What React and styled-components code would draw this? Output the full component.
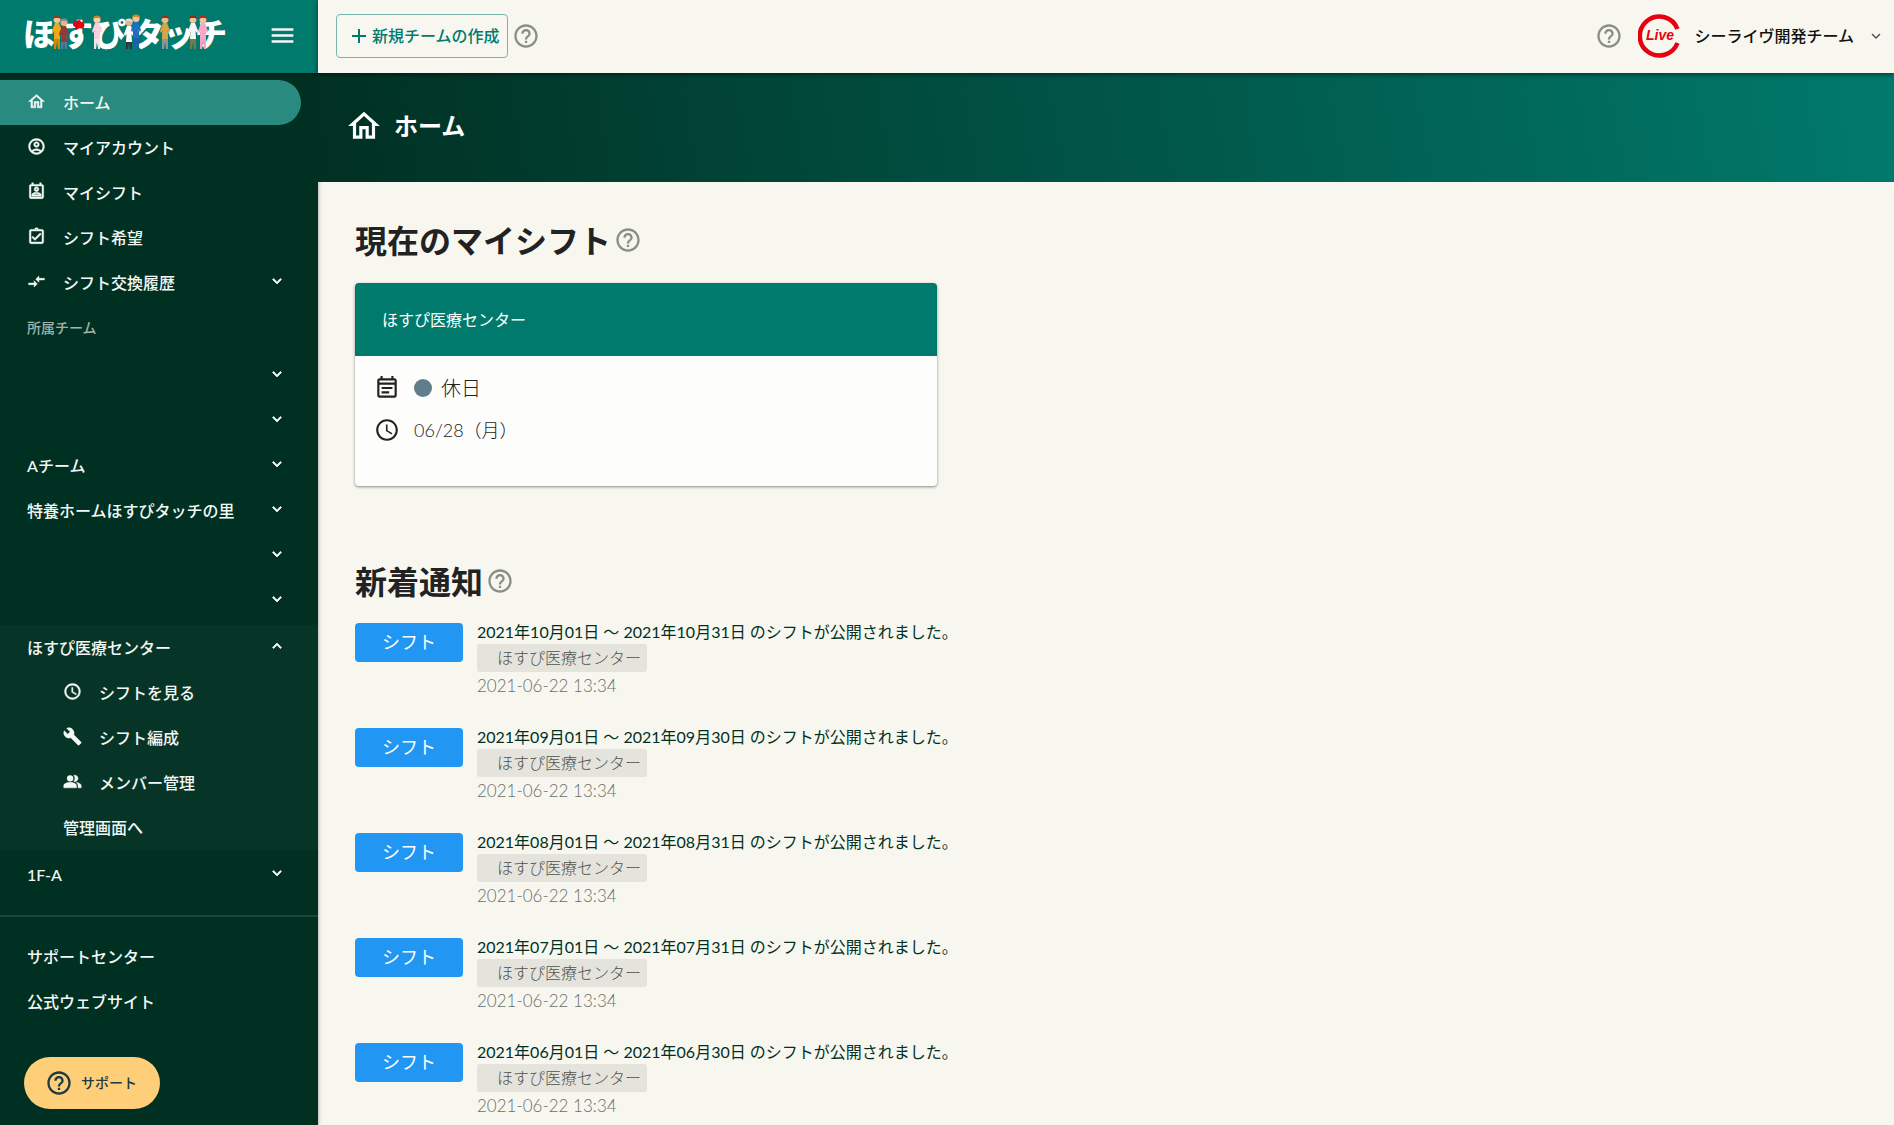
import React from 'react';
import styled, { createGlobalStyle } from 'styled-components';
import {
  MdOutlineHome,
  MdOutlineAccountCircle,
  MdOutlinePermContactCalendar,
  MdOutlineAssignmentTurnedIn,
  MdCompareArrows,
  MdAccessTime,
  MdBuild,
  MdPeopleAlt,
  MdOutlineEventNote,
  MdHelpOutline,
  MdExpandMore,
  MdExpandLess,
  MdMenu,
  MdAdd,
} from 'react-icons/md';

const color = {
  primary: '#007a6c',
  deep: '#003022',
  group: '#063527',
  active: '#298b7f',
  page: '#f7f7f0',
  ink: '#222222',
  muted: '#8a8f86',
  blue: '#2196f3',
};

const GlobalStyle = createGlobalStyle`
  *, *::before, *::after { box-sizing: border-box; }
  body {
    margin: 0;
    background: ${color.page};
    color: ${color.ink};
    font-family: Lato, "Noto Sans CJK JP", sans-serif;
    font-size: 16px;
    line-height: 24px;
  }
  button { font: inherit; color: inherit; border: 0; padding: 0; background: none; cursor: pointer; }
  a { color: inherit; text-decoration: none; }
  svg { display: block; flex: none; }
  h1, h2, h3, p, ul { margin: 0; padding: 0; }
  ul { list-style: none; }
`;

const Shell = styled.div`
  display: grid;
  grid-template-columns: 318px minmax(0, 1fr);
  min-height: 100vh;
`;

const Sidebar = styled.aside`
  background: ${color.deep};
  color: #f4f8f5;
  font-weight: 500;
  box-shadow: 0 0 4px rgba(0, 0, 0, 0.4);
`;

const Brand = styled.div`
  display: flex;
  align-items: center;
  justify-content: space-between;
  height: 73px;
  padding: 0 21px 2px 20px;
  background: ${color.primary};
  box-shadow: 0 1px 4px rgba(0, 0, 0, 0.5);
`;

const Nav = styled.nav`
  display: flex;
  flex-direction: column;
  gap: 2px;
  padding-top: 7px;
`;

const Section = styled.ul`
  background: ${(p) => (p.$open ? color.group : 'transparent')};
`;

const rowStyle = `
  display: flex;
  align-items: center;
  gap: 17px;
  height: 45px;
  text-align: left;
  svg { margin-bottom: 3px; stroke: none; }
  svg path:not([fill="none"]) { stroke: currentColor; stroke-width: 0.6px; }
`;

const RowLink = styled.a`
  ${rowStyle}
  margin-right: 17px;
  padding-left: ${(p) => (p.$nested ? 63 : 27)}px;
  border-radius: 0 23px 23px 0;
  background: ${(p) => (p.$active ? color.active : 'transparent')};
`;

const RowButton = styled.button`
  ${rowStyle}
  width: 100%;
  padding: 0 32px 0 27px;
  svg:last-child { margin-left: auto; }
  svg:last-child path:not([fill="none"]) { stroke-width: 1px; }
`;

const SectionLabel = styled.h3`
  height: 44px;
  padding-left: 27px;
  font-size: 14px;
  font-weight: 500;
  line-height: 42px;
  color: #a3b4ad;
`;

const Divider = styled.hr`
  width: 100%;
  height: 2px;
  margin: 16px 0 15px;
  border: 0;
  background: #1a4538;
`;

const SupportButton = styled.button`
  position: fixed;
  left: 24px;
  bottom: 16px;
  display: flex;
  align-items: center;
  gap: 8px;
  height: 52px;
  padding: 0 23px 0 21px;
  border-radius: 26px;
  background: #ffce78;
  color: #203a44;
  font-size: 14px;
  font-weight: 500;
`;

const Topbar = styled.header`
  position: relative;
  display: flex;
  align-items: center;
  height: 73px;
  padding: 0 9px 2px 18px;
  background: ${color.page};
  box-shadow: 0 1px 5px rgba(0, 0, 0, 0.6);
`;

const CreateButton = styled.button`
  display: flex;
  align-items: center;
  gap: 1px;
  height: 44px;
  padding: 0 7px 0 10px;
  border: 1px solid #76b5aa;
  border-radius: 4px;
  color: ${color.primary};
  font-weight: 500;
`;

const HelpButton = styled.button`
  color: ${color.muted};
  margin-left: ${(p) => p.$gap || 0}px;
`;

const Account = styled.div`
  display: flex;
  align-items: center;
  margin-left: auto;
`;

const TeamMenu = styled.button`
  display: flex;
  align-items: center;
  gap: 13px;
  margin-left: 15px;
  font-weight: 500;
  color: #111;
  svg:last-child { color: #555; }
`;

const Banner = styled.div`
  display: flex;
  align-items: center;
  gap: 11px;
  height: 109px;
  padding: 0 27px 4px;
  color: #fff;
  background: linear-gradient(80deg, ${color.deep}, ${color.primary});
`;

const BannerTitle = styled.h1`
  font-size: 24px;
  line-height: 36px;
  font-weight: 700;
`;

const Content = styled.main`
  padding: 35px 37px 0;
`;

const Heading = styled.div`
  display: flex;
  align-items: center;
  gap: 3px;
  height: 48px;
  h2 {
    font-size: 32px;
    line-height: 48px;
    font-weight: 700;
  }
  button { margin-bottom: 2px; }
`;

const Card = styled.article`
  max-width: 582px;
  margin: 18px 0 72px;
  border-radius: 4px;
  overflow: hidden;
  background: #fdfdfb;
  box-shadow: 0 1px 3px rgba(0, 0, 0, 0.45);
`;

const CardHead = styled.h3`
  padding: 25px 27px 24px;
  font-size: 16px;
  font-weight: 400;
  line-height: 24px;
  color: #fff;
  background: ${color.primary};
`;

const CardBody = styled.div`
  padding: 11px 19px 35px;
`;

const CardRow = styled.div`
  display: flex;
  align-items: center;
  height: 42px;
  font-weight: 300;
  font-size: ${(p) => p.$size}px;
  svg { margin-right: 14px; }
`;

const Dot = styled.span`
  width: 18px;
  height: 18px;
  margin-right: 9px;
  border-radius: 50%;
  background: #607d8b;
`;

const Notices = styled.ul`
  display: flex;
  flex-direction: column;
  gap: 25px;
  margin-top: 14px;
`;

const Notice = styled.li`
  display: flex;
  align-items: flex-start;
  gap: 14px;
`;

const Kind = styled.span`
  flex: none;
  width: 108px;
  margin-top: 3px;
  border-radius: 4px;
  background: ${color.blue};
  color: #fff;
  font-size: 18px;
  line-height: 39px;
  text-align: center;
`;

const NoticeText = styled.a`
  display: block;
  color: ${color.deep};
`;

const Tag = styled.span`
  display: block;
  width: fit-content;
  padding: 0 6px 0 20px;
  border-radius: 3px;
  background: #e4e4dd;
  color: #50524c;
  font-weight: 300;
  line-height: 28px;
`;

const Time = styled.time`
  display: block;
  color: #6c6e68;
  font-size: 17px;
  font-weight: 300;
  line-height: 28px;
`;

const people = [
  { x: 32, hair: '#7a4524', skin: '#f3c49a', top: '#f0a818', legs: '#c98a10' },
  { x: 39, hair: '#8d8d8d', skin: '#e8b48c', top: '#8c3d38', legs: '#55789c', small: true },
  { x: 72, hair: '#c9803c', skin: '#f7d0ae', top: '#f5cfe0', legs: '#f3e3ea' },
  { x: 104, hair: '#dcdcdc', skin: '#e8b48c', top: '#ffffff', legs: '#34353c', small: true },
  { x: 111, hair: '#d98a2b', skin: '#f3c49a', top: '#1f6fc0', legs: '#1b60a8', tall: true },
  { x: 140, hair: '#8c3020', skin: '#f3b98a', top: '#d9a441', legs: '#8f9498' },
  { x: 168, hair: '#7d3020', skin: '#f3c49a', top: '#f4f7f8', legs: '#6f7d4d' },
  { x: 178, hair: '#a83020', skin: '#f3c49a', top: '#f4a9c8', legs: '#f0a3bd' },
];

function Person({ x, hair, skin, top, legs, small, tall }) {
  const y = tall ? 7 : small ? 11 : 8;
  return (
    <g transform={`translate(${x} ${y})`}>
      <path d={`M2 17h6v${25 - y}h-2l-1-7-1 7h-2z`} fill={legs} />
      <path d="M3 8h4l3 8-1 2-1.500-2 .5 8h-6l.5-8L1 18l-1-2z" fill={top} />
      <circle cx="5" cy="4.500" r="3.500" fill={skin} />
      <path d="M1 4.500a4 4 0 0 1 8 0L7 3H3z" fill={hair} />
    </g>
  );
}

function Logo() {
  return (
    <svg width="210" height="58" viewBox="0 0 210 58" role="img" aria-label="ほすぴタッチ">
      <text
        y="39"
        x="3 41 74 112 143 175"
        fill="#fff"
        fontFamily="'Noto Sans CJK JP', sans-serif"
        fontWeight="900"
        fontSize="32"
      >
        ほすぴタッチ
      </text>
      {people.map((p) => (
        <Person key={p.x} {...p} />
      ))}
      <path d="M57 14c2-2 4-1 4 1 3 0 4 2 3 5-1 2-3 2-4 1-2 2-5 1-5-1-2-1-3-3-1-5 0-1 1-1 3-1z" fill="#e60012" />
    </svg>
  );
}

function LiveLogo() {
  return (
    <svg width="43" height="44" viewBox="0 0 43 44" role="img" aria-label="Live">
      <path d="M39.500 15A19.500 19.500 0 1 0 39.500 29" fill="none" stroke="#e60012" strokeWidth="4.500" />
      <text
        x="22"
        y="26"
        textAnchor="middle"
        fill="#e60012"
        fontFamily="'Liberation Sans', sans-serif"
        fontWeight="700"
        fontStyle="italic"
        fontSize="14"
      >
        Live
      </text>
    </svg>
  );
}

function Help({ gap }) {
  return (
    <HelpButton type="button" aria-label="ヘルプ" $gap={gap}>
      <MdHelpOutline size={28} />
    </HelpButton>
  );
}

function Item({ icon: Icon, label, active, nested }) {
  return (
    <li>
      <RowLink href="#" $active={active} $nested={nested} aria-current={active ? 'page' : undefined}>
        {Icon && <Icon size={19} />}
        {label}
      </RowLink>
    </li>
  );
}

function Toggle({ icon: Icon, label, open }) {
  return (
    <li>
      <RowButton type="button" aria-expanded={!!open} aria-label={label || 'チーム'}>
        {Icon && <Icon size={19} />}
        {label}
        {open ? <MdExpandLess size={18} /> : <MdExpandMore size={18} />}
      </RowButton>
    </li>
  );
}

const teams = ['', '', 'Aチーム', '特養ホームほすぴタッチの里', '', ''];

const periods = [
  ['2021年10月01日', '2021年10月31日'],
  ['2021年09月01日', '2021年09月30日'],
  ['2021年08月01日', '2021年08月31日'],
  ['2021年07月01日', '2021年07月31日'],
  ['2021年06月01日', '2021年06月30日'],
];

export default function App() {
  return (
    <>
      <GlobalStyle />
      <Shell>
        <Sidebar>
          <Brand>
            <Logo />
            <button type="button" aria-label="メニュー">
              <MdMenu size={29} />
            </button>
          </Brand>
          <Nav>
            <Section>
              <Item icon={MdOutlineHome} label="ホーム" active />
              <Item icon={MdOutlineAccountCircle} label="マイアカウント" />
              <Item icon={MdOutlinePermContactCalendar} label="マイシフト" />
              <Item icon={MdOutlineAssignmentTurnedIn} label="シフト希望" />
              <Toggle icon={MdCompareArrows} label="シフト交換履歴" />
            </Section>
            <SectionLabel>所属チーム</SectionLabel>
            <Section>
              {teams.map((name, i) => (
                <Toggle key={i} label={name} />
              ))}
            </Section>
            <Section $open>
              <Toggle label="ほすぴ医療センター" open />
              <Item icon={MdAccessTime} label="シフトを見る" nested />
              <Item icon={MdBuild} label="シフト編成" nested />
              <Item icon={MdPeopleAlt} label="メンバー管理" nested />
              <Item label="管理画面へ" nested />
            </Section>
            <Section>
              <Toggle label="1F-A" />
            </Section>
            <Divider />
            <Section>
              <Item label="サポートセンター" />
              <Item label="公式ウェブサイト" />
            </Section>
          </Nav>
        </Sidebar>

        <div>
          <Topbar>
            <CreateButton type="button">
              <MdAdd size={24} />
              新規チームの作成
            </CreateButton>
            <Help gap={4} />
            <Account>
              <Help />
              <TeamMenu type="button">
                <LiveLogo />
                シーライヴ開発チーム
                <MdExpandMore size={18} />
              </TeamMenu>
            </Account>
          </Topbar>
          <Banner>
            <MdOutlineHome size={38} />
            <BannerTitle>ホーム</BannerTitle>
          </Banner>
          <Content>
            <section>
              <Heading>
                <h2>現在のマイシフト</h2>
                <Help />
              </Heading>
              <Card>
                <CardHead>ほすぴ医療センター</CardHead>
                <CardBody>
                  <CardRow $size={20}>
                    <MdOutlineEventNote size={26} />
                    <Dot />
                    休日
                  </CardRow>
                  <CardRow $size={18}>
                    <MdAccessTime size={26} />
                    06/28（月）
                  </CardRow>
                </CardBody>
              </Card>
            </section>
            <section>
              <Heading>
                <h2>新着通知</h2>
                <Help />
              </Heading>
              <Notices>
                {periods.map(([from, to]) => (
                  <Notice key={from}>
                    <Kind>シフト</Kind>
                    <div>
                      <NoticeText href="#">
                        {from} ～ {to} のシフトが公開されました。
                      </NoticeText>
                      <Tag>ほすぴ医療センター</Tag>
                      <Time dateTime="2021-06-22T13:34">2021-06-22 13:34</Time>
                    </div>
                  </Notice>
                ))}
              </Notices>
            </section>
          </Content>
        </div>
      </Shell>
      <SupportButton type="button">
        <MdHelpOutline size={28} />
        サポート
      </SupportButton>
    </>
  );
}
